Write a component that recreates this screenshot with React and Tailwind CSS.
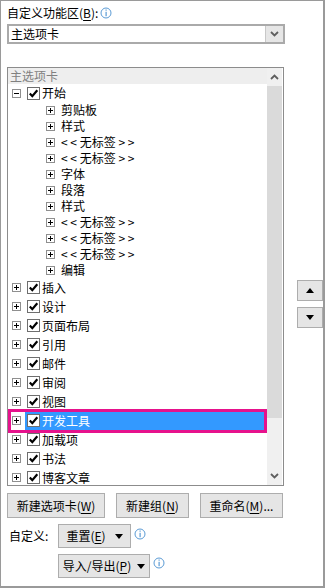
import React from "react";

const font = { fontFamily: '"Noto Sans CJK SC", "Noto Sans", sans-serif' };

const Info = () => (
  <svg width="12" height="12" viewBox="0 0 12 12" className="shrink-0">
    <circle cx="6" cy="6" r="5" fill="none" stroke="#5b9bd5" strokeWidth="1" />
    <rect x="5.5" y="2.5" width="1.2" height="1.2" fill="#5b9bd5" />
    <rect x="5.5" y="4.8" width="1.2" height="4.4" fill="#5b9bd5" />
  </svg>
);

const Expander = ({ open }) => (
  <svg width="9" height="9" viewBox="0 0 9 9" className="block">
    <rect x="0.5" y="0.5" width="8" height="8" fill="#fff" stroke="#8f8f8f" />
    <rect x="2" y="4" width="5" height="1" fill="#000" />
    {!open && <rect x="4" y="2" width="1" height="5" fill="#000" />}
  </svg>
);

const Check = () => (
  <svg width="13" height="13" viewBox="0 0 13 13" className="block">
    <rect x="0.5" y="0.5" width="12" height="12" fill="#fff" stroke="#6e6e6e" />
    <path d="M2.8 6.6 L5.3 9.2 L10.3 3.3" fill="none" stroke="#000" strokeWidth="2.2" />
  </svg>
);

const Chevron = ({ up }) => (
  <svg width="9" height="6" viewBox="0 0 9 6" className="block">
    <path
      d={up ? "M1 5 L4.5 1.5 L8 5" : "M1 1 L4.5 4.5 L8 1"}
      fill="none"
      stroke="#5f5f5f"
      strokeWidth="1.8"
    />
  </svg>
);

const Tri = ({ up }) => (
  <svg width="8" height="5" viewBox="0 0 8 5" className="block">
    <path d={up ? "M0 5 L4 0 L8 5 Z" : "M0 0 L8 0 L4 5 Z"} fill="#000" />
  </svg>
);

const U = ({ children }) => <span className="underline underline-offset-2">{children}</span>;

const subItems = [
  "剪贴板",
  "样式",
  "< < 无标签 > >",
  "< < 无标签 > >",
  "字体",
  "段落",
  "样式",
  "< < 无标签 > >",
  "< < 无标签 > >",
  "< < 无标签 > >",
  "编辑",
];

const tabs = ["插入", "设计", "页面布局", "引用", "邮件", "审阅", "视图", "开发工具", "加载项", "书法", "博客文章"];

const Btn = ({ className = "", children }) => (
  <div
    className={
      "flex items-center justify-center border border-[#adadad] bg-[#e5e5e5] text-[12px] text-black " +
      className
    }
  >
    {children}
  </div>
);

export default function App() {
  return (
    <div
      style={font}
      className="relative w-[325px] h-[588px] overflow-hidden bg-white border-t border-l border-r-2 border-b-2 border-[#9a9a9a] pl-[6px] text-[12px] leading-none text-black"
    >
      <div className="flex items-center gap-[2px] h-[16px] mt-[4px]">
        <span>
          自定义功能区(<U>B</U>):
        </span>
        <Info />
      </div>

      <div className="mt-[3px] flex w-[278px] h-[20px] border-2 border-[#aaaaaa]">
        <div className="flex-1 flex items-center pl-[2px]">主选项卡</div>
        <div className="w-[18px] bg-[#e6e6e6] border-l border-[#c8c8c8] flex items-center justify-center">
          <Chevron />
        </div>
      </div>

      <div className="mt-[23px] flex items-start">
        <div className="flex w-[278px] h-[419px] border border-[#8c8c8c] pr-[1px] overflow-hidden">
          <div className="flex-1 flex flex-col overflow-hidden">
            <div className="h-[16px] bg-[#eeeeee] text-[#808080] flex items-center pl-[2px] shrink-0">
              主选项卡
            </div>
            <div className="h-[18px] flex items-center shrink-0">
              <div className="ml-[4px]">
                <Expander open />
              </div>
              <div className="ml-[6px]">
                <Check />
              </div>
              <span className="ml-[2px]">开始</span>
            </div>
            {subItems.map((s, i) => (
              <div key={i} className="h-[16px] flex items-center shrink-0">
                <div className="ml-[38px]">
                  <Expander />
                </div>
                <span className="ml-[6px] whitespace-pre">{s}</span>
              </div>
            ))}
            {tabs.map((t) => {
              const sel = t === "开发工具";
              return (
                <div key={t} className="relative h-[19px] flex items-center shrink-0">
                  {sel && (
                    <div className="absolute left-0 right-0 top-[-2px] bottom-[-3px] border-[3px] border-[#e6128c] pl-[14px]">
                      <div className="h-full bg-[#3399ff]" />
                    </div>
                  )}
                  <div className="relative ml-[4px]">
                    <Expander />
                  </div>
                  <div className="relative ml-[6px]">
                    <Check />
                  </div>
                  <span className={"relative ml-[2px] " + (sel ? "text-white" : "")}>{t}</span>
                </div>
              );
            })}
          </div>
          <div className="w-[15px] flex flex-col bg-[#f0f0f0]">
            <div className="h-[18px] flex items-center justify-center">
              <Chevron up />
            </div>
            <div className="h-[332px] bg-[#dadada]" />
            <div className="flex-1 flex items-end justify-center pb-[6px]">
              <Chevron />
            </div>
          </div>
        </div>

        <div className="ml-[13px] mt-[213px] flex flex-col gap-[6px]">
          <Btn className="w-[26px] h-[21px]">
            <Tri up />
          </Btn>
          <Btn className="w-[26px] h-[21px]">
            <Tri />
          </Btn>
        </div>
      </div>

      <div className="mt-[7px] flex gap-[11px]">
        <Btn className="w-[98px] h-[25px]">
          新建选项卡(<U>W</U>)
        </Btn>
        <Btn className="w-[73px] h-[25px]">
          新建组(<U>N</U>)
        </Btn>
        <Btn className="w-[83px] h-[25px]">
          重命名(<U>M</U>)...
        </Btn>
      </div>

      <div className="mt-[6px] flex items-center">
        <span className="w-[51px] pl-[2px]">自定义:</span>
        <Btn className="w-[73px] h-[24px] gap-[9px]">
          <span>
            重置(<U>E</U>)
          </span>
          <Tri />
        </Btn>
        <div className="ml-[3px] -mt-[4px]">
          <Info />
        </div>
      </div>

      <div className="mt-[6px] flex items-center pl-[51px]">
        <Btn className="w-[92px] h-[24px] gap-[6px]">
          <span>
            导入/导出(<U>P</U>)
          </span>
          <Tri />
        </Btn>
        <div className="ml-[3px] -mt-[6px]">
          <Info />
        </div>
      </div>
    </div>
  );
}
